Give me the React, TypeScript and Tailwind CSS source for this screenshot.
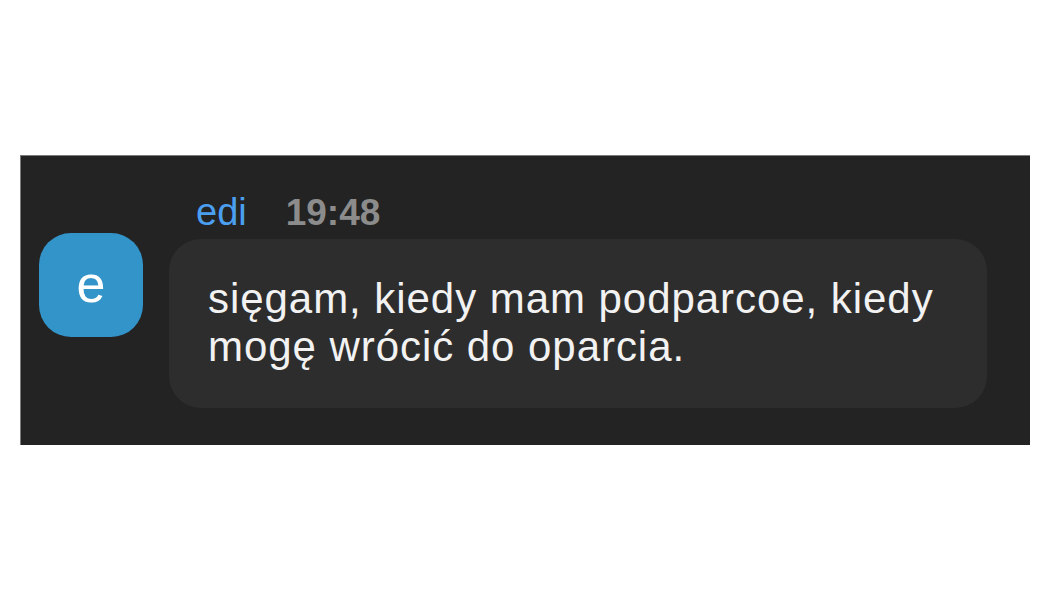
import React from 'react';

const font = { fontFamily: '"Liberation Sans", Arial, sans-serif' };

export default function App() {
  return (
    <div className="w-[1050px] h-[600px] bg-white pt-[155px] pl-[20px]" style={font}>
      {/* Message panel */}
      <div className="w-[1010px] h-[290px] bg-[#232323] border-l border-t border-[#7a7a7a] flex items-start pl-[18px] pt-[38px]">
        <div className="mt-[39px] w-[104px] h-[104px] rounded-[32px] bg-[#3394c9] flex items-center justify-center shrink-0">
          <span className="text-white text-[52px] leading-none -mt-[2px]">e</span>
        </div>
        <div className="ml-[26px] flex flex-col">
          <div className="flex items-baseline pl-[27px] h-[37px] leading-[37px]">
            <span className="text-[#4b9ff0] text-[38px]">edi</span>
            <span className="ml-[39px] text-[#8c8c8c] text-[37px] font-semibold">19:48</span>
          </div>
          <div className="mt-[8px] w-[818px] h-[169px] rounded-[32px] bg-[#2d2d2d] pl-[39px] pr-[30px] pt-[36px]">
            <p className="text-[#f2f2f2] text-[42px] leading-[48px] tracking-[0.95px]">
              sięgam, kiedy mam podparcoe, kiedy
              <br />
              mogę wrócić do oparcia.
            </p>
          </div>
        </div>
      </div>
    </div>
  );
}
